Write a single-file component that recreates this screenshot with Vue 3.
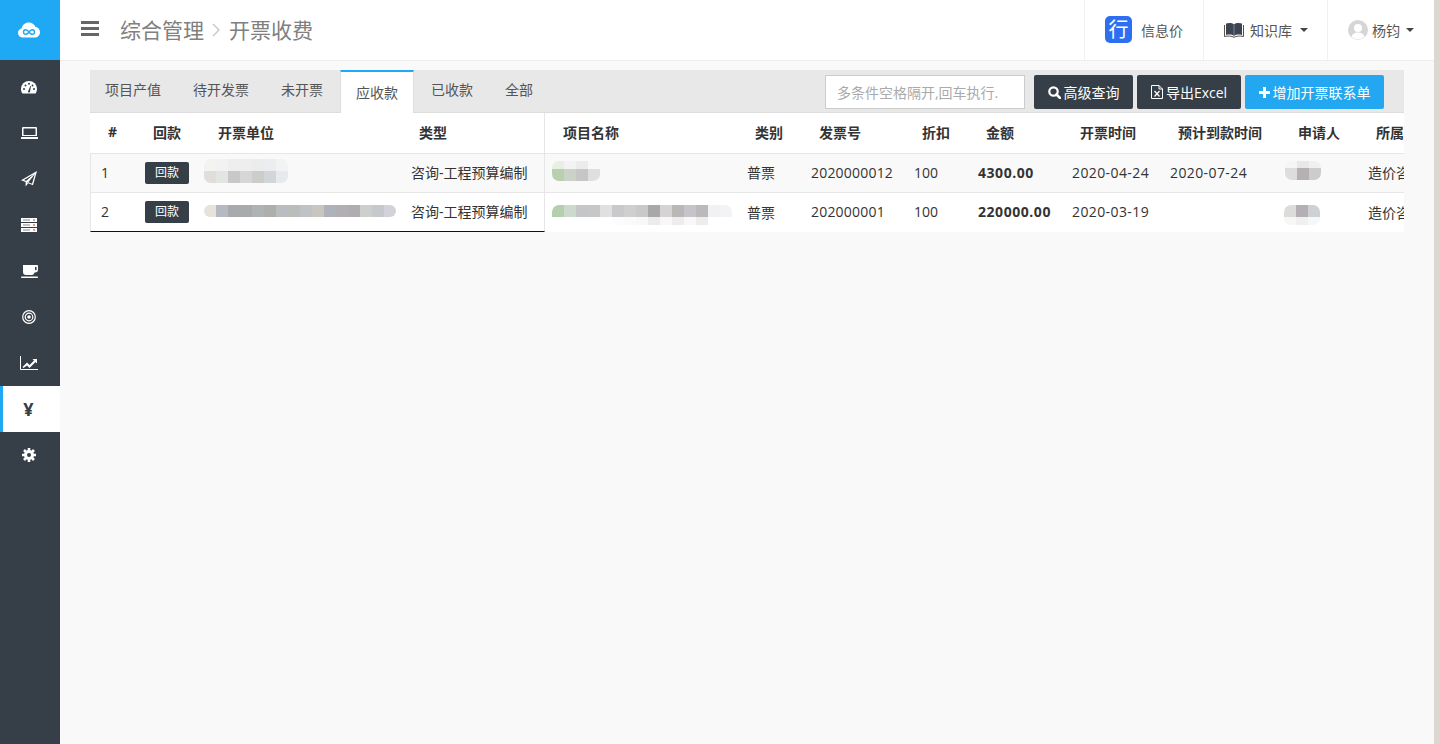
<template>
  <div class="page">
    <aside class="sidebar">
      <div class="logo">
        <svg width="22" height="16" viewBox="0 0 22 16">
          <path d="M5 15.500C2 15.500 0 13.500 0 11c0-2.200 1.500-4 3.600-4.400C4.200 3 7.200 .5 10.800 .5c3 0 5.500 1.700 6.600 4.300C20 5.200 22 7.500 22 10.200c0 3-2.400 5.300-5.400 5.300z" fill="#fff"/>
          <path d="M11 10c-1-1.500-2-2.200-3.200-2.200-1.300 0-2.300 1-2.300 2.200s1 2.200 2.300 2.200c1.200 0 2.200-.7 3.200-2.200zm0 0c1-1.500 2-2.200 3.200-2.200 1.300 0 2.300 1 2.300 2.200s-1 2.200-2.300 2.200c-1.200 0-2.200-.7-3.200-2.200z" fill="none" stroke="#1fa8f3" stroke-width="1.400"/>
        </svg>
      </div>
      <nav class="side-nav">
        <a v-for="item in navItems" :key="item" class="side-item" :class="{ active: item === 'yen' }">
          <svg v-if="item === 'gauge'" width="16" height="14" viewBox="0 0 16 14">
            <path d="M8 1a8 8 0 0 0-8 8c0 1.700.5 3.200 1.400 4.500h13.200A8 8 0 0 0 16 9a8 8 0 0 0-8-8z" fill="#fff"/>
            <g fill="#363e48"><circle cx="3" cy="9" r="1"/><circle cx="4.500" cy="5.500" r="1"/><circle cx="8" cy="3.800" r="1"/><circle cx="11.500" cy="5.500" r="1"/><circle cx="13" cy="9" r="1"/><path d="M7 11.500 9.400 6l.6.200-1 5.500a1 1 0 0 1-2-.2z"/></g>
          </svg>
          <svg v-else-if="item === 'laptop'" width="17" height="12" viewBox="0 0 17 12">
            <path d="M2 0h13a1 1 0 0 1 1 1v8H1V1a1 1 0 0 1 1-1zm.500 1.500V8h12V1.500z" fill="#fff" fill-rule="evenodd"/>
            <rect y="10" width="17" height="2" rx=".5" fill="#fff"/>
          </svg>
          <svg v-else-if="item === 'plane'" width="16" height="16" viewBox="0 0 16 16">
            <path d="M16 0 0 9.200l4.600 1.900v4.400l2.700-3.200 4.700 2zM13.300 3 3 9l2.200.9zM6.100 11.300v1.200l.8-.9zM13.800 3.200l-6.500 8 3.700 1.500z" fill="#fff" fill-rule="evenodd"/>
            <path d="M13.300 3 5.200 9.900l.9 1.400z" fill="#fff"/>
          </svg>
          <svg v-else-if="item === 'server'" width="16" height="14" viewBox="0 0 16 14">
            <g fill="#fff"><rect width="16" height="4"/><rect y="5" width="16" height="4"/><rect y="10" width="16" height="4"/></g>
            <g fill="#888"><rect x="2" y="1.500" width="7" height="1"/><rect x="2" y="6.500" width="7" height="1"/><rect x="2" y="11.500" width="7" height="1"/></g>
            <g fill="#c33"><rect x="12" y="1.500" width="2" height="1"/><rect x="12" y="6.500" width="2" height="1"/><rect x="12" y="11.500" width="2" height="1"/></g>
          </svg>
          <svg v-else-if="item === 'coffee'" width="17" height="13" viewBox="0 0 17 13">
            <path d="M2 0h14a1 1 0 0 1 1 1v3.500a3 3 0 0 1-3 3h-.5A3 3 0 0 1 11 10H5a3 3 0 0 1-3-3z" fill="#fff"/>
            <rect x="14" y="1.800" width="1.600" height="3.600" rx=".8" fill="#363e48"/>
            <rect y="11.500" width="17" height="1.500" rx=".7" fill="#fff"/>
          </svg>
          <svg v-else-if="item === 'target'" width="14" height="14" viewBox="0 0 14 14">
            <g fill="none" stroke="#fff" stroke-width="1.200"><circle cx="7" cy="7" r="6.300"/><circle cx="7" cy="7" r="3.800"/></g>
            <circle cx="7" cy="7" r="1.800" fill="#fff"/>
          </svg>
          <svg v-else-if="item === 'chart'" width="18" height="14" viewBox="0 0 18 14">
            <path d="M.5 0v13.500H18" fill="none" stroke="#fff"/>
            <path d="M2.500 11 7 6.500l2.500 2.500L14 4.500 12.500 3H17v4.500l-1.500-1.500-6 6L7 9.500 3.500 12z" fill="#fff"/>
          </svg>
          <span v-else-if="item === 'yen'" class="yen">¥</span>
          <svg v-else width="14" height="14" viewBox="0 0 14 14">
            <circle cx="7" cy="7" r="3.500" fill="none" stroke="#fff" stroke-width="3"/>
            <g stroke="#fff" stroke-width="2.600"><path d="M7 0v3M7 11v3M0 7h3M11 7h3M2 2l2 2M10 10l2 2M12 2l-2 2M4 10l-2 2"/></g>
          </svg>
        </a>
      </nav>
    </aside>

    <div class="main">
      <header class="topbar">
        <div class="crumb">
          <span class="burger"><i></i><i></i><i></i></span>
          <span class="crumb-text">综合管理</span>
          <svg class="crumb-sep" width="8" height="14" viewBox="0 0 8 14"><path d="M1 1l6 6-6 6" fill="none" stroke="#c4c4c4" stroke-width="1.300"/></svg>
          <span class="crumb-text">开票收费</span>
        </div>
        <div class="top-right">
          <div class="top-item info">
            <span class="hang">行</span>
            <span>信息价</span>
          </div>
          <div class="top-item know">
            <svg width="20" height="16" viewBox="0 0 20 16">
              <path d="M2 1.500c3-1 6-.8 8 .8 2-1.600 5-1.800 8-.8v11.500c-3-.8-6-.6-8 .8-2-1.400-5-1.600-8-.8z" fill="#3b4450"/>
              <path d="M.5 3v11.500c3.500-.8 7-.6 9.500.8 2.500-1.400 6-1.600 9.500-.8V3" fill="none" stroke="#5a5148" stroke-width="1"/>
              <path d="M10 2.300V14" stroke="#7d8794" stroke-width="1"/>
            </svg>
            <span>知识库</span>
            <i class="caret"></i>
          </div>
          <div class="top-item user">
            <svg width="20" height="20" viewBox="0 0 20 20">
              <circle cx="10" cy="10" r="10" fill="#d6d6d6"/>
              <circle cx="10" cy="8" r="4" fill="#fff"/>
              <path d="M3.500 17c1-3.500 3.500-4.500 6.500-4.500s5.500 1 6.500 4.500a10 10 0 0 1-13 0z" fill="#fff"/>
            </svg>
            <span>杨钧</span>
            <i class="caret"></i>
          </div>
        </div>
      </header>

      <section class="content">
        <div class="tabbar">
          <ul class="tabs">
            <li v-for="tab in tabs" :key="tab" :class="{ active: tab === '应收款' }">{{ tab }}</li>
          </ul>
          <div class="tools">
            <input class="search" type="text" placeholder="多条件空格隔开,回车执行.">
            <button class="btn dark query">
              <svg width="13" height="13" viewBox="0 0 13 13"><circle cx="5.500" cy="5.500" r="4.200" fill="none" stroke="#fff" stroke-width="2.200"/><path d="M8.500 8.500l3.400 3.400" stroke="#fff" stroke-width="2.600" stroke-linecap="round"/></svg>
              高级查询
            </button>
            <button class="btn dark export">
              <svg width="12" height="14" viewBox="0 0 12 14"><path d="M.5.500h7.500l3.500 3.500v9.500H.5z" fill="none" stroke="#fff"/><path d="M8 .5V4h3.500" fill="none" stroke="#fff"/><path d="M3.500 6l5 5.500M8.500 6l-5 5.500" stroke="#fff" stroke-width="1.200"/></svg>
              导出Excel
            </button>
            <button class="btn blue add">
              <svg width="11" height="11" viewBox="0 0 11 11"><path d="M4 0h3v4h4v3H7v4H4V7H0V4h4z" fill="#fff"/></svg>
              增加开票联系单
            </button>
          </div>
        </div>

        <div class="table-wrap">
          <table>
            <colgroup>
              <col v-for="(w, i) in colWidths" :key="i" :style="{ width: w + 'px' }">
            </colgroup>
            <thead>
              <tr>
                <th v-for="(h, i) in headers" :key="h" :class="{ split: i === 3 }">{{ h }}</th>
              </tr>
            </thead>
            <tbody>
              <tr v-for="(row, idx) in rows" :key="row.no" :class="{ odd: idx === 0 }">
                <td class="fixed">{{ row.no }}</td>
                <td class="fixed btn-cell"><span class="back-btn">回款</span></td>
                <td class="fixed mosaic-cell">
                  <div class="mosaic" :style="mosaicPos(row.unit)">
                    <div v-for="(r, n) in row.unit.rows" :key="n" class="m-row" :style="{ height: r.h + 'px' }">
                      <span v-for="(c, k) in r.cells" :key="k" :style="{ background: c }"></span>
                    </div>
                  </div>
                </td>
                <td class="fixed split">咨询-工程预算编制</td>
                <td class="mosaic-cell">
                  <div class="mosaic" :style="mosaicPos(row.project)">
                    <div v-for="(r, n) in row.project.rows" :key="n" class="m-row" :style="{ height: r.h + 'px' }">
                      <span v-for="(c, k) in r.cells" :key="k" :style="{ background: c }"></span>
                    </div>
                  </div>
                </td>
                <td>普票</td>
                <td class="num">{{ row.invoice }}</td>
                <td>100</td>
                <td class="money">{{ row.amount }}</td>
                <td class="date">{{ row.date }}</td>
                <td class="date">{{ row.due }}</td>
                <td class="mosaic-cell">
                  <div class="mosaic" :style="mosaicPos(row.person)">
                    <div v-for="(r, n) in row.person.rows" :key="n" class="m-row" :style="{ height: r.h + 'px' }">
                      <span v-for="(c, k) in r.cells" :key="k" :style="{ background: c }"></span>
                    </div>
                  </div>
                </td>
                <td>造价咨询部</td>
              </tr>
            </tbody>
          </table>
        </div>
      </section>
    </div>
    <div class="edge"></div>
  </div>
</template>

<script setup>
const navItems = ['gauge', 'laptop', 'plane', 'server', 'coffee', 'target', 'chart', 'yen', 'gear']
const tabs = ['项目产值', '待开发票', '未开票', '应收款', '已收款', '全部']
const headers = ['#', '回款', '开票单位', '类型', '项目名称', '类别', '发票号', '折扣', '金额', '开票时间', '预计到款时间', '申请人', '所属部门']
const colWidths = [45, 65, 201, 144, 192, 64, 103, 64, 94, 98, 120, 78, 120]

// the blurred names in the screenshot
const rows = [
  {
    no: 1,
    invoice: '2020000012',
    amount: '4300.00',
    date: '2020-04-24',
    due: '2020-07-24',
    unit: {
      top: 5, left: 4,
      rows: [
        { h: 12, cells: ['#f3f3f2', '#f1f2f1', '#eeeeee', '#eeeeee', '#ebecec', '#ecedee', '#f3f3f4'] },
        { h: 12, cells: ['#e0ddda', '#e3e5e4', '#c8c8c8', '#d4d6d7', '#cccdcb', '#d3d6d9', '#e8e9ec'] }
      ]
    },
    project: {
      top: 7, left: 7,
      rows: [
        { h: 8, cells: ['#e8f0e4', '#f3f3f3', '#ececec', '#f8f8f8'] },
        { h: 12, cells: ['#b8d0b0', '#cbd3c8', '#c5c6c6', '#dedfe1'] }
      ]
    },
    person: {
      top: 7, left: 5,
      rows: [
        { h: 7, cells: ['#f5f5f5', '#e8e8e8', '#f0f0f0'] },
        { h: 12, cells: ['#dddddb', '#b5b0b3', '#cccccd'] }
      ]
    }
  },
  {
    no: 2,
    invoice: '202000001',
    amount: '220000.00',
    date: '2020-03-19',
    due: '',
    unit: {
      top: 12, left: 4,
      rows: [
        { h: 12, cells: ['#e6e3dc', '#b5bac2', '#a9aaad', '#a8aaab', '#aeb3b3', '#adafad', '#b9bdc1', '#bbbdbb', '#bfc3c6', '#c8c7bf', '#aeb2ba', '#b1aeb4', '#b0adb1', '#cdcfcd', '#c5c9cb', '#d2d3da'] }
      ]
    },
    project: {
      top: 12, left: 7,
      rows: [
        { h: 12, cells: ['#b3cfae', '#cdd9cd', '#c5c6c8', '#c6c7c8', '#e0e0e0', '#c9c9cb', '#cfcfcf', '#c9c9c9', '#a8a8a8', '#d5d3d4', '#bab8b7', '#c6c4ca', '#bbb9bc', '#f1f1f3', '#f3f3f5'] },
        { h: 8, cells: ['#fff', '#fff', '#fff', '#fff', '#fff', '#fcfcfc', '#fafafa', '#f8f8f8', '#ececec', '#f8f8f8', '#ededed', '#f8f8f8', '#ededed'] }
      ]
    },
    person: {
      top: 12, left: 4,
      rows: [
        { h: 12, cells: ['#dcdcda', '#b4afb2', '#cfd0d4'] },
        { h: 8, cells: ['#f7f7f7', '#f0f0f0', '#f6f8f8'] }
      ]
    }
  }
]

const mosaicPos = (m) => ({ marginTop: m.top + 'px', marginLeft: m.left + 'px' })
</script>

<style>
html, body {
  margin: 0;
  background: #f9f9f9;
}
</style>

<style scoped>
.page {
  display: flex;
  min-height: 744px;
  font-family: "Open Sans", "Noto Sans CJK SC", sans-serif;
  font-size: 14px;
  color: #333;
  background: #f9f9f9;
}

.sidebar {
  width: 60px;
  flex-shrink: 0;
  background: #363e48;
}

.logo {
  height: 60px;
  background: #1fa8f3;
  display: flex;
  align-items: center;
  justify-content: center;
  padding-right: 2px;
  box-sizing: border-box;
}

.side-nav {
  padding-top: 4px;
}

.side-item {
  height: 46px;
  display: flex;
  align-items: center;
  justify-content: center;
  box-sizing: border-box;
  padding-right: 2px;
}

.side-item.active {
  background: #fff;
  border-left: 3px solid #1fa8f3;
  padding-right: 6px;
}

.yen {
  font-size: 18px;
  font-weight: 700;
  color: #363e48;
  line-height: 1;
}

.main {
  flex: 1;
  min-width: 0;
}

.edge {
  width: 6px;
  flex-shrink: 0;
  background: #dcd8cf;
}

.topbar {
  height: 61px;
  box-sizing: border-box;
  background: #fff;
  border-bottom: 1px solid #eee;
  display: flex;
  justify-content: space-between;
}

.crumb {
  display: flex;
  align-items: center;
  padding: 0 0 3px 21px;
}

.burger {
  width: 18px;
  margin-right: 21px;
}

.burger i {
  display: block;
  height: 3px;
  margin-bottom: 3px;
  background: #666;
}

.burger i:last-child {
  margin-bottom: 0;
}

.crumb-text {
  font-size: 21px;
  color: #808080;
}

.crumb-sep {
  margin: 2px 9px 0 8px;
}

.top-right {
  display: flex;
}

.top-item {
  display: flex;
  align-items: center;
  border-left: 1px solid #f0f0f0;
  font-size: 14px;
  color: #555;
  box-sizing: border-box;
  padding-bottom: 1px;
}

.info {
  width: 119px;
  padding-left: 20px;
  gap: 9px;
}

.know {
  width: 124px;
  padding-left: 20px;
  gap: 6px;
}

.user {
  width: 107px;
  padding-left: 20px;
  gap: 4px;
}

.hang {
  width: 27px;
  height: 27px;
  border-radius: 5px;
  background: #2d6ff0;
  color: #fff;
  font-size: 20px;
  line-height: 27px;
  text-align: center;
}

.caret {
  width: 0;
  height: 0;
  border-left: 4px solid transparent;
  border-right: 4px solid transparent;
  border-top: 4px solid #444;
  margin-left: 2px;
}

.content {
  padding: 9px 30px 0;
}

.tabbar {
  height: 43px;
  box-sizing: border-box;
  background: #e8e8e8;
  border-bottom: 1px solid #ddd;
  display: flex;
  justify-content: space-between;
}

.tabs {
  list-style: none;
  margin: 0 0 0 -1px;
  padding: 0;
  display: flex;
}

.tabs li {
  padding: 0 16px;
  line-height: 40px;
  color: #555;
  height: 40px;
}

.tabs li.active {
  height: 43px;
  margin-left: 1px;
  margin-right: 1px;
  box-sizing: border-box;
  background: #fff;
  border-top: 2px solid #1fa8f3;
  border-right: 1px solid #ddd;
  border-left: 1px solid #ddd;
  padding: 0 15px;
  line-height: 41px;
  width: 74px;
}

.tools {
  display: flex;
  align-items: flex-start;
  gap: 4px;
  padding: 5px 20px 0 0;
}

.search {
  width: 200px;
  height: 34px;
  box-sizing: border-box;
  margin-right: 5px;
  padding: 0 11px;
  border: 1px solid #ccc;
  background: #fff;
  font-family: inherit;
  font-size: 14px;
}

.search::placeholder {
  color: #aaa;
}

.btn {
  height: 34px;
  border: none;
  border-radius: 2px;
  padding: 0;
  color: #fff;
  font-family: inherit;
  font-size: 14px;
  display: flex;
  align-items: center;
  justify-content: center;
  gap: 3px;
}

.btn.dark {
  background: #363e48;
}

.btn.blue {
  background: #22a7f0;
}

.query {
  width: 99px;
}

.export {
  width: 104px;
}

.add {
  width: 139px;
}

.table-wrap {
  overflow: hidden;
  background: #fff;
}

table {
  table-layout: fixed;
  width: 1388px;
  border-collapse: separate;
  border-spacing: 0;
}

th {
  height: 41px;
  box-sizing: border-box;
  padding: 0 0 3px 18px;
  font-size: 14px;
  font-weight: 700;
  text-align: left;
  white-space: nowrap;
  border-bottom: 1px solid #e6e6e6;
}

td {
  height: 39px;
  box-sizing: border-box;
  padding: 0 0 2px 10px;
  white-space: nowrap;
  overflow: hidden;
  border-bottom: 1px solid #e6e6e6;
}

tbody tr:last-child td {
  border-bottom: none;
}

tbody tr:last-child td.fixed {
  border-bottom: 1px solid #111;
}

tr.odd td {
  background: #f9f9f9;
}

.split {
  border-right: 1px solid #e6e6e6;
}

.fixed:first-child {
  border-left: 1px solid #e6e6e6;
}

.num {
  letter-spacing: .2px;
}

.date {
  letter-spacing: .4px;
}

.money {
  font-weight: 700;
  letter-spacing: .55px;
}

td.btn-cell {
  padding-bottom: 0;
}

.back-btn {
  display: block;
  width: 44px;
  height: 22px;
  border-radius: 2px;
  background: #363e48;
  color: #fff;
  font-size: 12px;
  line-height: 22px;
  text-align: center;
}

td.mosaic-cell {
  padding: 0;
  vertical-align: top;
}

.mosaic {
  width: max-content;
  border-radius: 7px;
  overflow: hidden;
}

.m-row {
  display: flex;
}

.m-row span {
  width: 12px;
  height: 100%;
}
</style>
